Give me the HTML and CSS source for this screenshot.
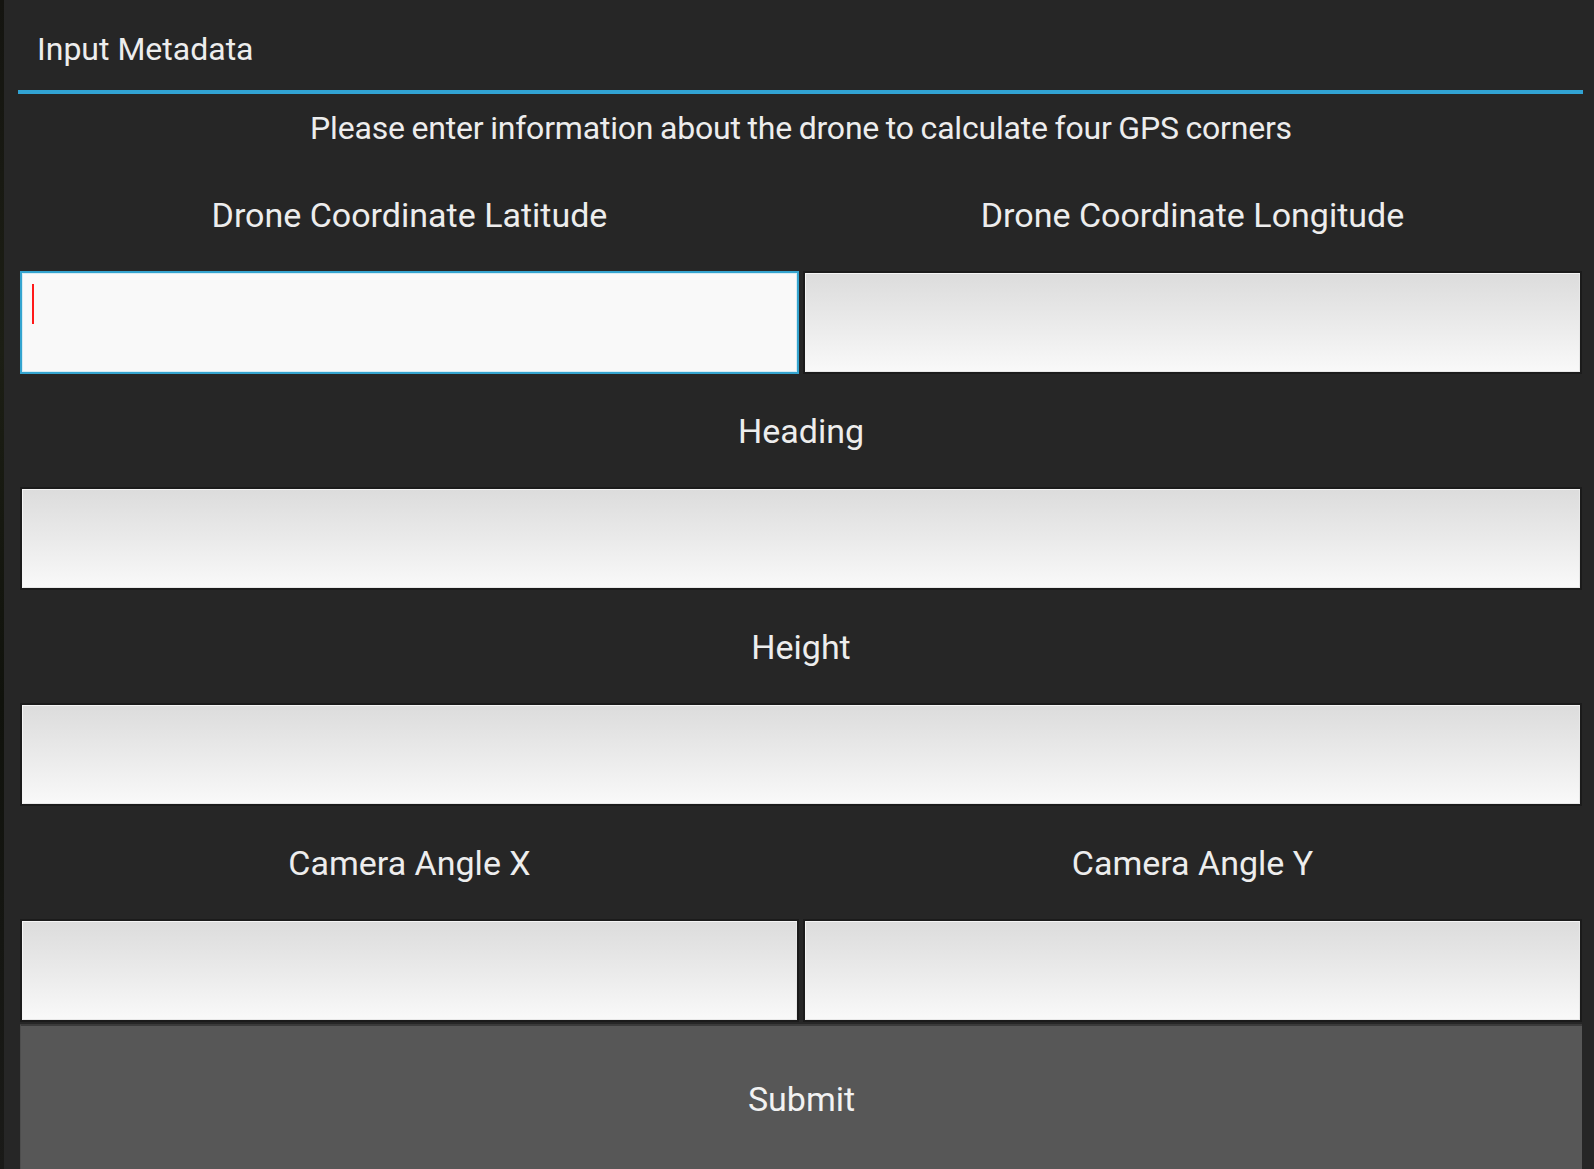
FILE: index.html
```html
<!DOCTYPE html>
<html>
<head>
<meta charset="utf-8">
<title>Input Metadata</title>
<link rel="stylesheet" href="styles.css">
</head>
<body>
<div class="screen">
  <div class="edge"></div>
  <div class="popup">
    <div class="title">Input Metadata</div>
    <div class="separator"></div>
    <div class="content">
      <div class="subtitle">Please enter information about the drone to calculate four GPS corners</div>
      <div class="row two">
        <div class="label">Drone Coordinate Latitude</div>
        <div class="label">Drone Coordinate Longitude</div>
      </div>
      <div class="row two inputs">
        <div class="field focus"><span class="cursor"></span></div>
        <div class="field"></div>
      </div>
      <div class="row">
        <div class="label">Heading</div>
      </div>
      <div class="row inputs">
        <div class="field"></div>
      </div>
      <div class="row">
        <div class="label">Height</div>
      </div>
      <div class="row inputs">
        <div class="field"></div>
      </div>
      <div class="row two">
        <div class="label">Camera Angle X</div>
        <div class="label">Camera Angle Y</div>
      </div>
      <div class="row two inputs">
        <div class="field"></div>
        <div class="field"></div>
      </div>
      <div class="button">Submit</div>
    </div>
  </div>
</div>
</body>
</html>
```

FILE: styles.css
```css
html, body {
  margin: 0;
  padding: 0;
  background: #262626;
  overflow: hidden;
  height: 100%;
}
.screen {
  display: flex;
  height: 1169px;
  font-family: Roboto, "Noto Sans", sans-serif;
  color: #ededed;
}
.edge {
  width: 4px;
  background: linear-gradient(180deg, #141410 0%, #1c1e14 30%, #10120c 60%, #1a1a18 100%);
  flex: none;
}
.popup {
  margin-left: 14px;
  width: 1565px;
  display: flex;
  flex-direction: column;
}
.popup > *, .content > * {
  flex-shrink: 0;
}
.title {
  height: 90px;
  padding-left: 19px;
  padding-top: 8px;
  font-size: 32px;
  box-sizing: border-box;
  display: flex;
  align-items: center;
}
.separator {
  height: 4px;
  background: #31a3d3;
}
.content {
  padding: 0 1px 0 2px;
  display: flex;
  flex-direction: column;
}
.subtitle {
  height: 64px;
  display: flex;
  align-items: center;
  justify-content: center;
  font-size: 32px;
  letter-spacing: -0.2px;
  word-spacing: -1px;
  padding-top: 4px;
  box-sizing: border-box;
}
.row {
  display: flex;
  gap: 4px;
}
.row > * {
  flex: 1;
}
.label {
  height: 113px;
  display: flex;
  align-items: center;
  justify-content: center;
  font-size: 34px;
  box-sizing: border-box;
}
.inputs {
  height: 103px;
}
.field {
  height: 103px;
  box-sizing: border-box;
  border: 2px solid #1b1b1b;
  background: linear-gradient(180deg, #dcdcdc 0%, #eaeaea 50%, #f9f9f9 100%);
  box-shadow: inset 1px 1px 0 #f4f4f4, inset -1px -1px 0 #e8e8e8;
  position: relative;
}
.field.focus {
  background: #f9f9f9;
  border: 2px solid #34a4cf;
  box-shadow: inset 0 0 0 1px #d6ecf4;
}
.cursor {
  position: absolute;
  left: 10px;
  top: 11px;
  width: 2px;
  height: 40px;
  background: #ff1a1a;
}
.row + .button {
  margin-top: 2px;
}
.button {
  height: 148px;
  background: #575757;
  border-top: 2px solid #3a3a3a;
  border-left: 1px solid #4e4e4e;
  box-sizing: border-box;
  display: flex;
  align-items: center;
  justify-content: center;
  font-size: 34px;
  color: #f2f2f2;
}
```
